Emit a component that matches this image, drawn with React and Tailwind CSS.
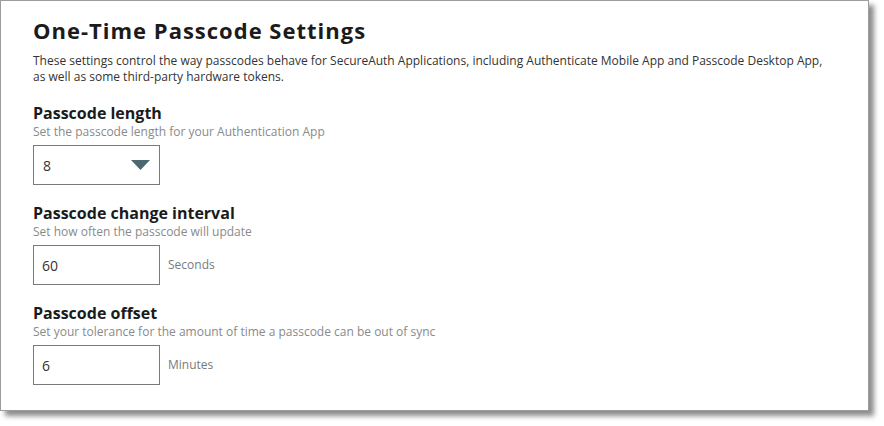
export default function App() {
  const font = { fontFamily: '"Open Sans", "Noto Sans", sans-serif' };
  return (
    <div className="w-[884px] h-[426px] bg-white" style={font}>
      <div className="w-[869px] h-[411px] border border-[#9c9c9c] bg-white shadow-[5px_5px_5px_rgba(0,0,0,0.45)] pl-[32px] pt-[15px]">
        <h1 className="text-[22px] leading-[28px] font-bold tracking-[1px] text-[#1b1b1b]">One-Time Passcode Settings</h1>
        <p className="mt-[9px] w-[800px] text-[12px] leading-[16px] text-[#333]">
          These settings control the way passcodes behave for SecureAuth Applications, including Authenticate Mobile App and Passcode Desktop App, as well as some third-party hardware tokens.
        </p>

        <div className="mt-[17px]">
          <h2 className="text-[16px] leading-[22px] font-bold text-[#1b1b1b]">Passcode length</h2>
          <p className="text-[12px] leading-[16px] text-[#8a8a8a]">Set the passcode length for your Authentication App</p>
          <div className="mt-[5px] w-[127px] h-[40px] border border-[#7a7a7a] flex items-center justify-between pl-[9px] pr-[9px]">
            <span className="text-[14px] text-[#333]">8</span>
            <svg width="19" height="10" viewBox="0 0 19 10">
              <polygon points="0,0 19,0 9.5,10" fill="#4d6770" />
            </svg>
          </div>
        </div>

        <div className="mt-[17px]">
          <h2 className="text-[16px] leading-[22px] font-bold text-[#1b1b1b]">Passcode change interval</h2>
          <p className="text-[12px] leading-[16px] text-[#8a8a8a]">Set how often the passcode will update</p>
          <div className="mt-[5px] flex items-center gap-[8px]">
            <div className="w-[127px] h-[40px] border border-[#7a7a7a] flex items-center pl-[8px]">
              <span className="text-[14px] text-[#333]">60</span>
            </div>
            <span className="text-[12px] text-[#7a7a7a]">Seconds</span>
          </div>
        </div>

        <div className="mt-[17px]">
          <h2 className="text-[16px] leading-[22px] font-bold text-[#1b1b1b]">Passcode offset</h2>
          <p className="text-[12px] leading-[16px] text-[#8a8a8a]">Set your tolerance for the amount of time a passcode can be out of sync</p>
          <div className="mt-[5px] flex items-center gap-[8px]">
            <div className="w-[127px] h-[40px] border border-[#7a7a7a] flex items-center pl-[8px]">
              <span className="text-[14px] text-[#333]">6</span>
            </div>
            <span className="text-[12px] text-[#7a7a7a]">Minutes</span>
          </div>
        </div>
      </div>
    </div>
  );
}
